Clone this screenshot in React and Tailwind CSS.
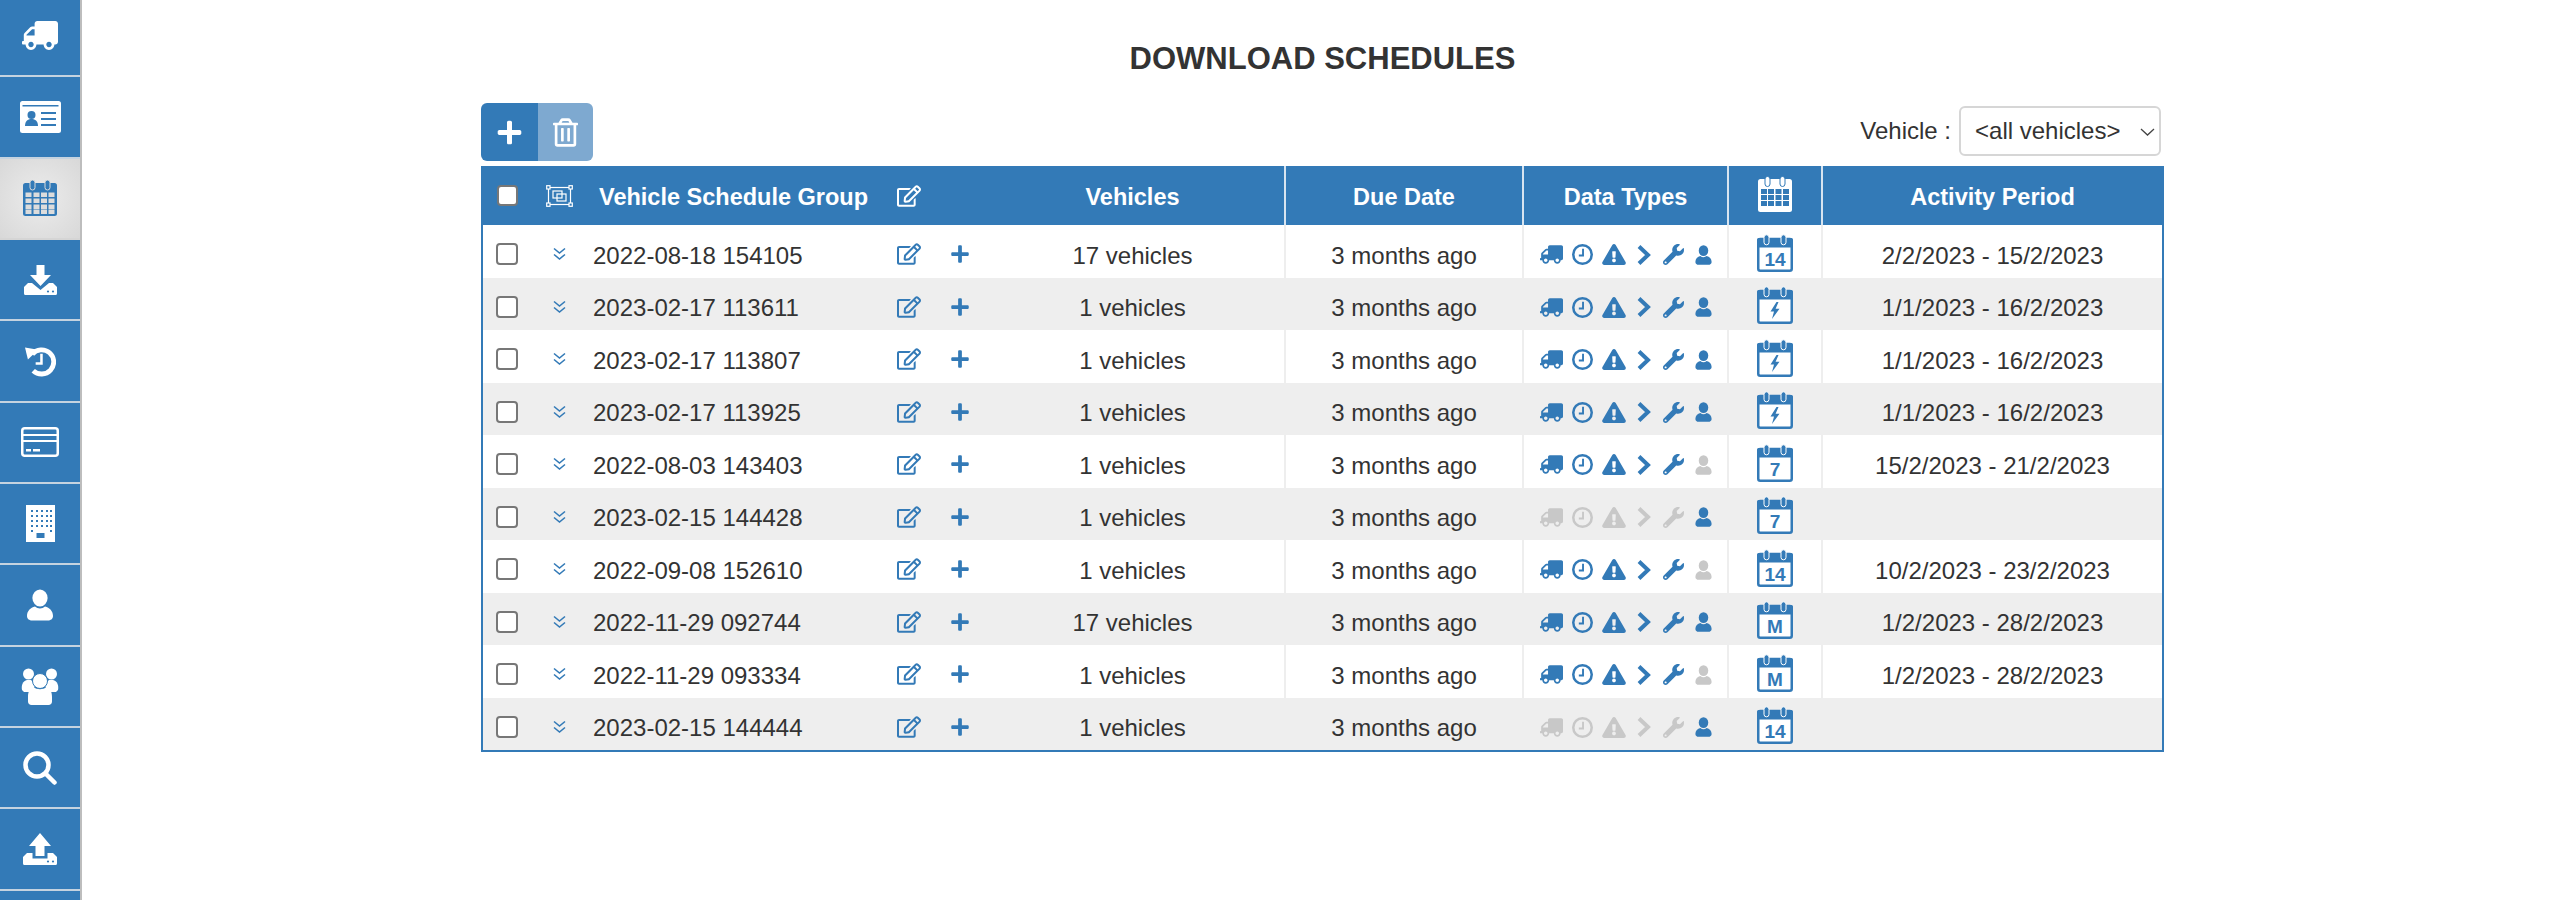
import React from "react";
import { FaTruck, FaRegEdit, FaPlus, FaExclamationTriangle, FaWrench, FaRegTrashAlt } from "react-icons/fa";

const BLUE = "#337ab7";

const UserGlyph = ({ className, fill = "currentColor" }) => (
  <svg viewBox="0 0 26 32" className={className} fill={fill}>
    <ellipse cx="13" cy="9" rx="7.6" ry="8.6" />
    <path d="M8 17.5c1.4 1.2 3.2 1.9 5 1.9s3.6-.7 5-1.9c4.6 1.3 8 4.500 8 9.500 0 3-2.500 4.500-5 4.500H5c-2.500 0-5-1.500-5-4.500 0-5 3.400-8.200 8-9.500z" />
  </svg>
);

const DownloadIcon = () => (
  <svg viewBox="0 0 33 30" className="w-[33px] h-[30px]" fill="white">
    <path d="M12.500 0 H20.500 V10 H27 L16.500 21 L6 10 H12.500 Z" />
    <path d="M4 18 H8 L16.500 25 L25 18 H29 L33 22 V28.500 Q33 30 31.500 30 H1.500 Q0 30 0 28.500 V22 Z" />
    <circle cx="24" cy="26.500" r="1.100" fill={BLUE} />
    <circle cx="29" cy="26.500" r="1.100" fill={BLUE} />
  </svg>
);

const UploadIcon = () => (
  <svg viewBox="0 0 34 32" className="w-[34px] h-[32px]" fill="white">
    <path d="M17 0 L28 13 H21.500 V23 H12.500 V13 H6 Z" />
    <path d="M4 20 H9.500 V25.500 H24.500 V20 H30 L34 24 V30.500 Q34 32 32.500 32 H1.500 Q0 32 0 30.500 V24 Z" />
    <circle cx="25" cy="28.500" r="1.100" fill={BLUE} />
    <circle cx="30" cy="28.500" r="1.100" fill={BLUE} />
  </svg>
);

const IdCard = () => (
  <svg viewBox="0 0 41 32" className="w-[41px] h-[32px]">
    <rect width="41" height="32" rx="2.500" fill="white" />
    <rect x="2.500" y="4" width="36" height="1.500" fill={BLUE} />
    <circle cx="11.500" cy="14" r="4" fill={BLUE} />
    <path d="M5 25c0-4.500 2.500-7 6.500-7s6.500 2.500 6.500 7z" fill={BLUE} />
    <rect x="21" y="11" width="15" height="2" fill={BLUE} />
    <rect x="21" y="17" width="15" height="2" fill={BLUE} />
    <rect x="21" y="23" width="15" height="2" fill={BLUE} />
  </svg>
);

const SideCalendar = () => (
  <svg viewBox="0 0 34 36" className="w-[34px] h-[36px]">
    <rect x="0" y="3" width="34" height="33" rx="2.500" fill={BLUE} />
    <rect x="7" y="0" width="5" height="10" rx="2.500" fill={BLUE} stroke="#dcdcdc" strokeWidth="1" />
    <rect x="22" y="0" width="5" height="10" rx="2.500" fill={BLUE} stroke="#dcdcdc" strokeWidth="1" />
    {[12.500, 18.500, 24.500, 29.500].map((y, r) =>
      [2.500, 10.500, 18, 25.500].map((x, c) => <rect key={`${r}-${c}`} x={x} y={y} width="6" height="4.500" fill="#dcdcdc" />)
    )}
  </svg>
);

const HistoryIcon = () => (
  <svg viewBox="0 0 32 32" className="w-[31px] h-[32px]" fill="none" stroke="white">
    <path d="M7.500 9 A12.500 12.500 0 1 1 8.500 26" strokeWidth="5" />
    <path d="M0 2 L13.500 4.500 L3 14.500 Z" fill="white" stroke="none" />
    <path d="M17 8.500 V18.500 H11" strokeWidth="2.600" />
  </svg>
);

const CreditCard = () => (
  <svg viewBox="0 0 38 30" className="w-[38px] h-[30px]">
    <rect x="1.250" y="1.250" width="35.500" height="27.500" rx="2.500" fill="none" stroke="white" strokeWidth="2.500" />
    <rect x="1" y="7" width="36" height="2" fill="white" />
    <rect x="1" y="13" width="36" height="2" fill="white" />
    <rect x="5" y="22" width="5" height="2.500" fill="white" />
    <rect x="12" y="22" width="7" height="2.500" fill="white" />
  </svg>
);

const Building = () => (
  <svg viewBox="0 0 29 37" className="w-[29px] h-[37px]">
    <rect width="29" height="37" fill="white" />
    {[5, 10, 15, 20, 25].map((y, r) =>
      [5, 10, 15, 20, 24].map((x, c) =>
        r === 4 && c > 0 && c < 4 ? null : <rect key={`${r}-${c}`} x={x} y={y} width="2" height="2" fill={BLUE} />
      )
    )}
    <rect x="10.500" y="28" width="8" height="5" fill={BLUE} />
  </svg>
);

const Users = () => (
  <svg viewBox="0 0 38 37" className="w-[38px] h-[37px]" fill="white">
    <circle cx="7.500" cy="6" r="5.500" />
    <circle cx="30.500" cy="6" r="5.500" />
    <path d="M1 22c-1-5 1-9 5-10h4l4 4-2 8H3z" />
    <path d="M37 22c1-5-1-9-5-10h-4l-4 4 2 8h9z" />
    <circle cx="19" cy="13" r="7.500" stroke={BLUE} strokeWidth="1" />
    <path d="M12.500 19c1.800 1.500 4 2.200 6.500 2.200s4.700-.7 6.500-2.200c3.500 1.500 5.500 4.500 5.500 10v4.500c0 2-1.500 3.500-3.500 3.500h-17C8.500 37 7 35.500 7 33.500V29c0-5.500 2-8.500 5.500-10z" />
  </svg>
);

const Search = () => (
  <svg viewBox="0 0 34 34" className="w-[34px] h-[34px]" fill="none" stroke="white" strokeLinecap="round">
    <circle cx="14" cy="14" r="11.500" strokeWidth="4.500" />
    <path d="M22.500 22.500 L31.500 31.500" strokeWidth="4.500" />
  </svg>
);

const navItems = [
  <FaTruck className="w-[36px] h-[29px] -scale-x-100 text-white" />,
  <IdCard />,
  <SideCalendar />,
  <DownloadIcon />,
  <HistoryIcon />,
  <CreditCard />,
  <Building />,
  <UserGlyph className="w-[26px] h-[32px] text-white" />,
  <Users />,
  <Search />,
  <UploadIcon />,
  null,
];

const rows = [
  { name: "2022-08-18 154105", veh: "17 vehicles", cal: "14", period: "2/2/2023 - 15/2/2023", off: "" },
  { name: "2023-02-17 113611", veh: "1 vehicles", cal: "bolt", period: "1/1/2023 - 16/2/2023", off: "" },
  { name: "2023-02-17 113807", veh: "1 vehicles", cal: "bolt", period: "1/1/2023 - 16/2/2023", off: "" },
  { name: "2023-02-17 113925", veh: "1 vehicles", cal: "bolt", period: "1/1/2023 - 16/2/2023", off: "" },
  { name: "2022-08-03 143403", veh: "1 vehicles", cal: "7", period: "15/2/2023 - 21/2/2023", off: "user" },
  { name: "2023-02-15 144428", veh: "1 vehicles", cal: "7", period: "", off: "rest" },
  { name: "2022-09-08 152610", veh: "1 vehicles", cal: "14", period: "10/2/2023 - 23/2/2023", off: "user" },
  { name: "2022-11-29 092744", veh: "17 vehicles", cal: "M", period: "1/2/2023 - 28/2/2023", off: "" },
  { name: "2022-11-29 093334", veh: "1 vehicles", cal: "M", period: "1/2/2023 - 28/2/2023", off: "user" },
  { name: "2023-02-15 144444", veh: "1 vehicles", cal: "14", period: "", off: "rest" },
];

const Clock = ({ className }) => (
  <svg viewBox="0 0 20 20" className={className} fill="none" stroke="currentColor">
    <circle cx="10" cy="10" r="8.800" strokeWidth="2.400" />
    <path d="M10.500 4.500 V11 H6.500" strokeWidth="1.800" />
  </svg>
);

const Chevron = ({ className }) => (
  <svg viewBox="0 0 14 20" className={className} fill="none" stroke="currentColor" strokeWidth="4">
    <path d="M2 1.500 L11 10 L2 18.500" />
  </svg>
);

const DataTypes = ({ off }) => {
  const a = off === "rest" ? "text-[#c8c8c8]" : "text-[#337ab7]";
  const u = off === "user" ? "text-[#c8c8c8]" : "text-[#337ab7]";
  return (
    <div className="flex items-center justify-center">
      <FaTruck className={`w-[23px] h-[19px] -scale-x-100 ${a}`} />
      <Clock className={`w-[21px] h-[21px] ml-[9px] ${a}`} />
      <FaExclamationTriangle className={`w-[24px] h-[21px] ml-[9px] ${a}`} />
      <Chevron className={`w-[14px] h-[20px] ml-[11px] ${a}`} />
      <FaWrench className={`w-[21px] h-[21px] ml-[12px] ${a}`} />
      <UserGlyph className={`w-[17px] h-[20px] ml-[11px] ${u}`} />
    </div>
  );
};

const RowCalendar = ({ kind }) => (
  <svg viewBox="0 0 36 38" className="w-[36px] h-[38px] block mx-auto" fontFamily="'Liberation Sans', Arial, sans-serif">
    <rect x="1.250" y="5" width="33.500" height="31.750" rx="2" fill="white" stroke={BLUE} strokeWidth="2.500" />
    <rect x="0" y="4" width="36" height="9.500" rx="2" fill={BLUE} />
    <rect x="7" y="0.800" width="5" height="10" rx="2.500" fill={BLUE} stroke="white" strokeWidth="1" />
    <rect x="24" y="0.800" width="5" height="10" rx="2.500" fill={BLUE} stroke="white" strokeWidth="1" />
    {kind === "bolt" ? (
      <path d="M19.500 16 L13.500 25.500 H17 L15 33 L22.500 22.800 H18.600 L21.500 16 Z" fill={BLUE} />
    ) : (
      <text x="18" y="32" textAnchor="middle" fontSize="19" fontWeight="700" fill={BLUE}>
        {kind}
      </text>
    )}
  </svg>
);

const HeaderCalendar = () => (
  <svg viewBox="0 0 34 36" className="w-[34px] h-[36px] block mx-auto">
    <rect x="0" y="3" width="34" height="33" rx="2.500" fill="white" />
    <rect x="7" y="0.500" width="5" height="10" rx="2.500" fill="white" stroke={BLUE} strokeWidth="1" />
    <rect x="22" y="0.500" width="5" height="10" rx="2.500" fill="white" stroke={BLUE} strokeWidth="1" />
    {[13, 19, 25].map((y, r) =>
      [3, 10, 17.500, 25].map((x, c) => <rect key={`${r}-${c}`} x={x} y={y} width="6" height="5" fill={BLUE} />)
    )}
  </svg>
);

const GroupIcon = () => (
  <svg viewBox="0 0 27 22" className="w-[27px] h-[22px] block" fill="none" stroke="white" strokeWidth="1.200">
    <rect x="2.500" y="2.500" width="22" height="17" />
    <rect x="7" y="6" width="9" height="7" />
    <rect x="11" y="9" width="9" height="7" />
    {[[0.700, 0.700], [23, 0.700], [0.700, 18], [23, 18]].map(([x, y], i) => (
      <rect key={i} x={x} y={y} width="3.300" height="3.300" fill="#337ab7" />
    ))}
  </svg>
);

const DoubleDown = () => (
  <svg viewBox="0 0 13 14" className="w-[13px] h-[14px] block mx-auto" fill="none" stroke="#337ab7" strokeWidth="1.600">
    <path d="M1 1.500 L6.500 6 L12 1.500" />
    <path d="M1 7.500 L6.500 12 L12 7.500" />
  </svg>
);

const Check = ({ head }) => (
  <input
    type="checkbox"
    className={
      head
        ? "block mx-auto appearance-none w-[21px] h-[21px] rounded-[4px] border-2 border-[#777777] bg-white"
        : "block mx-auto appearance-none w-[22px] h-[22px] rounded-[4px] border-2 border-[#777777] bg-white"
    }
  />
);

export default function App() {
  return (
    <div className="flex h-[900px] overflow-hidden bg-white text-[#333333] font-['Liberation_Sans',Arial,sans-serif] text-[24px]">
      <aside className="w-[82px] shrink-0 border-r-2 border-[#bdbdbd] overflow-hidden">
        <nav className="-mt-[4px] flex flex-col">
          {navItems.map((icon, i) => (
            <button
              key={i}
              className={
                i === 2
                  ? "h-[81.33px] shrink-0 flex items-center justify-center border-b-2 border-[#d5d5d5] bg-[radial-gradient(circle,#ececec_0%,#d8d8d8_100%)]"
                  : "h-[81.33px] shrink-0 flex items-center justify-center border-b-2 border-[#c5d3e0] bg-[#337ab7]"
              }
            >
              {icon}
            </button>
          ))}
        </nav>
      </aside>

      <main className="flex-1 pl-[399px] pr-[398px]">
        <h1 className="h-[103px] pt-[41px] text-center text-[31px] leading-[36px] font-bold">DOWNLOAD SCHEDULES</h1>

        <div className="flex items-center justify-between h-[58px] mb-[5px]">
          <div className="flex h-[58px] rounded-[6px] overflow-hidden">
            <button className="w-[57px] flex items-center justify-center bg-[#337ab7]">
              <FaPlus className="w-[27px] h-[27px] text-white" />
            </button>
            <button className="w-[55px] flex items-center justify-center bg-[#7ea9d0]">
              <FaRegTrashAlt className="w-[25px] h-[29px] text-white" />
            </button>
          </div>
          <div className="flex items-center mr-[3px] -mt-[2px]">
            <span className="mr-[8px]">Vehicle :</span>
            <div className="relative">
              <select className="appearance-none block w-[202px] h-[50px] pl-[14px] rounded-[6px] border-2 border-[#d6d6d6] bg-white text-[24px]">
                <option>&lt;all vehicles&gt;</option>
              </select>
              <svg viewBox="0 0 15 8" className="absolute right-[6px] top-[22px] w-[15px] h-[8px] pointer-events-none" fill="none" stroke="#444444" strokeWidth="1.300">
                <path d="M1 1 L7.500 7 L14 1" />
              </svg>
            </div>
          </div>
        </div>

        <div className="border-2 border-t-0 border-[#337ab7]">
          <table className="w-full table-fixed border-separate border-spacing-0">
            <colgroup>
              <col className="w-[48px]" />
              <col className="w-[62px]" />
              <col className="w-[305px]" />
              <col className="w-[42px]" />
              <col className="w-[41px]" />
              <col className="w-[303px]" />
              <col className="w-[238px]" />
              <col className="w-[205px]" />
              <col className="w-[94px]" />
              <col className="w-[341px]" />
            </colgroup>
            <thead>
              <tr className="h-[59px] bg-[#337ab7] text-white text-[23.5px]">
                <th className="p-0"><Check head /></th>
                <th className="p-0 pr-[5px]"><div className="flex justify-center pt-[1px]"><GroupIcon /></div></th>
                <th className="p-0 pt-[5px] pl-[6px] text-left font-bold">Vehicle Schedule Group</th>
                <th className="p-0 pt-[1px] text-left"><FaRegEdit className="w-[24px] h-[22px] ml-[-1px]" /></th>
                <th colSpan={2} className="p-0 pt-[5px] pl-[41px] font-bold">Vehicles</th>
                <th className="p-0 pt-[5px] font-bold border-l-2 border-[#d8e4f0]">Due Date</th>
                <th className="p-0 pt-[5px] font-bold border-l-2 border-[#d8e4f0]">Data Types</th>
                <th className="p-0 pb-[3px] border-l-2 border-[#d8e4f0]"><HeaderCalendar /></th>
                <th className="p-0 pt-[5px] font-bold border-l-2 border-[#d8e4f0]">Activity Period</th>
              </tr>
            </thead>
            <tbody>
              {rows.map((r, i) => (
                <tr key={i} className={i % 2 === 0 ? "h-[53px] bg-white" : "h-[52px] bg-[#eeeeee]"}>
                  <td className="p-0 pt-[5px]"><Check /></td>
                  <td className="p-0 pt-[5px] pr-[5px]"><DoubleDown /></td>
                  <td className="p-0 pt-[8px]">{r.name}</td>
                  <td className="p-0 pt-[5px]"><FaRegEdit className="w-[24px] h-[22px] ml-[-1px] text-[#337ab7]" /></td>
                  <td className="p-0 pt-[5px]"><FaPlus className="w-[20px] h-[20px] ml-[10px] text-[#337ab7]" /></td>
                  <td className="p-0 pt-[8px] text-center">{r.veh}</td>
                  <td className="p-0 pt-[8px] text-center border-l-2 border-[#eeeeee]">3 months ago</td>
                  <td className="p-0 pt-[6px] border-l-2 border-[#eeeeee]"><DataTypes off={r.off} /></td>
                  <td className="p-0 pt-[2px] border-l-2 border-[#eeeeee]"><RowCalendar kind={r.cal} /></td>
                  <td className="p-0 pt-[8px] text-center border-l-2 border-[#eeeeee]">{r.period}</td>
                </tr>
              ))}
            </tbody>
          </table>
        </div>
      </main>
    </div>
  );
}
